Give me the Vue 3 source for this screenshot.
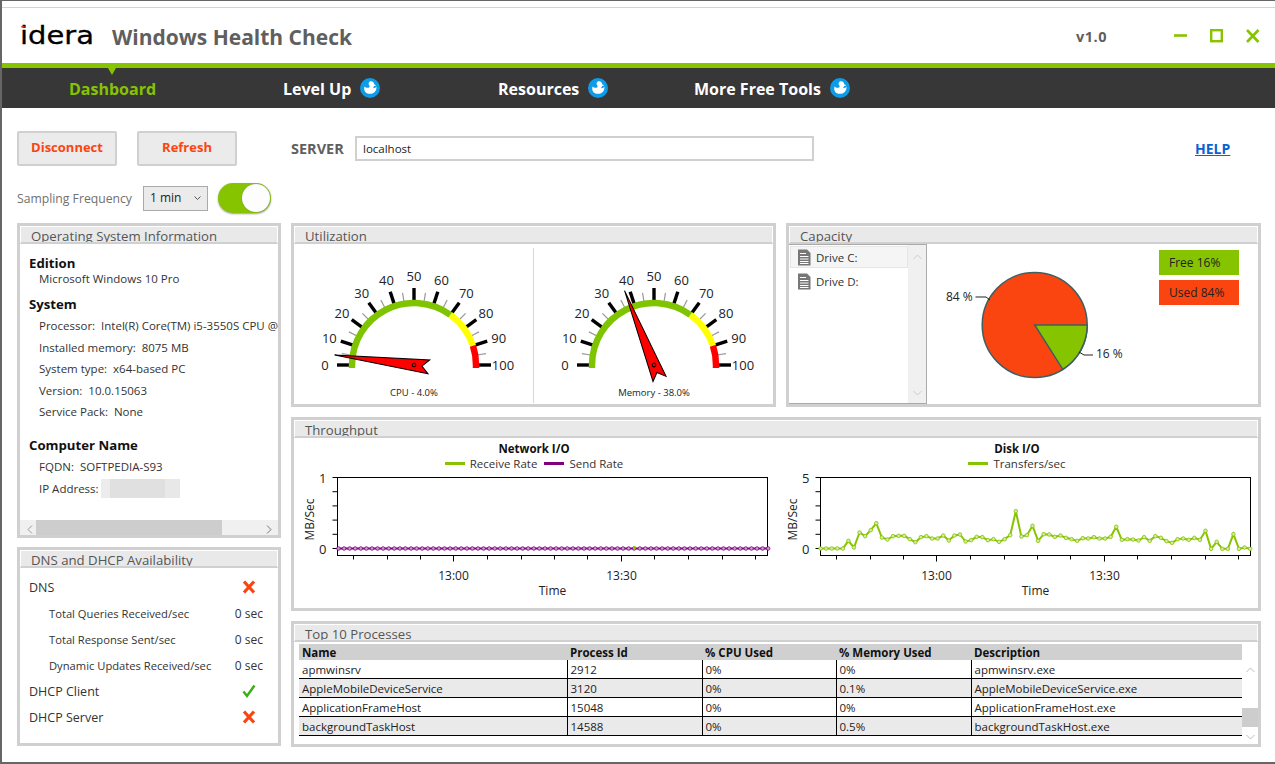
<script setup>
const gauges = [
  { label: 'CPU - 4.0%', value: 4, cx: 120 },
  { label: 'Memory - 38.0%', value: 38, cx: 360 },
]
const major = [0, 10, 20, 30, 40, 50, 60, 70, 80, 90, 100]
const minor = [5, 15, 25, 35, 45, 55, 65, 75, 85, 95]

const pt = (v, r) => {
  const a = Math.PI - (v * 1.8 * Math.PI) / 180
  return { x: Math.cos(a) * r, y: -Math.sin(a) * r }
}
const arc = (from, to) => {
  const a = pt(from, 62)
  const b = pt(to, 62)
  return `M${a.x} ${a.y}A62 62 0 0 1 ${b.x} ${b.y}`
}

const plotW = 430
const netDots = Array.from({ length: 78 }, (_, i) => i * 5.58)
const diskRaw = [400, 400, 400, 400, 400, 377, 397, 352, 363, 345, 324, 367, 373, 363, 362, 362, 372, 381, 366, 363, 370, 370, 361, 376, 361, 358, 379, 375, 365, 366, 375, 372, 380, 372, 360, 288, 364, 360, 332, 377, 357, 358, 365, 361, 368, 372, 377, 369, 370, 366, 370, 370, 365, 335, 374, 372, 373, 376, 366, 377, 363, 368, 378, 383, 372, 370, 374, 368, 374, 347, 401, 380, 401, 401, 357, 401, 397, 401]
const diskPts = diskRaw.map((y, i) => ({ x: i * 5.58, y: (y - 187) / 3 }))
const diskLine = diskPts.map((p) => `${p.x},${p.y}`).join(' ')
const netTicks = [16, 50, 83, 116, 150, 184, 217, 250, 284, 317, 351, 385, 418]
const majorTicks = [116, 284]
const yTicks = [0, 14.2, 28.4, 42.6, 56.8, 71]

const charts = [
  { title: 'Network I/O', max: 1, legend: [{ name: 'Receive Rate', color: '#86c400' }, { name: 'Send Rate', color: '#800080' }] },
  { title: 'Disk I/O', max: 5, legend: [{ name: 'Transfers/sec', color: '#86c400' }] },
]

const processes = [
  ['apmwinsrv', '2912', '0%', '0%', 'apmwinsrv.exe'],
  ['AppleMobileDeviceService', '3120', '0%', '0.1%', 'AppleMobileDeviceService.exe'],
  ['ApplicationFrameHost', '15048', '0%', '0%', 'ApplicationFrameHost.exe'],
  ['backgroundTaskHost', '14588', '0%', '0.5%', 'backgroundTaskHost.exe'],
]
</script>

<template>
  <div class="window">
    <header class="head">
      <svg class="logo" width="74" height="27" viewBox="0 0 74 27">
        <text x="0" y="22" textLength="74" lengthAdjust="spacingAndGlyphs" class="logo-text">idera</text>
        <rect x="1.200" y="4" width="3.400" height="1.400" fill="#e53212" />
      </svg>
      <h1 class="title">Windows Health Check</h1>
      <span class="version">v1.0</span>
      <div class="controls">
        <svg width="14" height="14" viewBox="0 0 14 14"><path d="M0 6.500H13" stroke="#86c400" stroke-width="2.600" /></svg>
        <svg width="14" height="14" viewBox="0 0 14 14"><rect x="1.200" y="1.200" width="10.600" height="11" fill="none" stroke="#86c400" stroke-width="2.400" /></svg>
        <svg width="14" height="14" viewBox="0 0 14 14"><path d="M1 1L12.500 13M12.500 1L1 13" stroke="#86c400" stroke-width="2.600" /></svg>
      </div>
    </header>

    <nav class="nav">
      <span class="tab active">Dashboard</span>
      <span v-for="t in ['Level Up', 'Resources', 'More Free Tools']" :key="t" class="tab" :class="'tab-' + t.split(' ')[0]">
        {{ t }}
        <svg class="duck" width="20" height="20" viewBox="0 0 20 20">
          <circle cx="10" cy="10" r="10" fill="#0e9ce8" />
          <path d="M11 3.200c2 0 3.200 1.400 3.100 3l2.200 1-2.300 1c-.2.900-.6 1.400-.9 1.900 1.400.3 2.500-.5 3.300-1.600.5 3.800-1.800 7.300-6.400 7.300-3.600 0-5.800-2-5.800-5.300 0-.7.100-1.300.3-1.900 1 1.200 3.600 1.700 4.700.8.700-.6.500-1.300-.1-2.300-1.300-2.100.2-3.900 1.900-3.900z" fill="#fff" />
        </svg>
      </span>
    </nav>

    <main class="body">
      <div class="toolbar">
        <div class="tool-left">
          <div class="btns">
            <button class="btn">Disconnect</button>
            <button class="btn">Refresh</button>
          </div>
          <div class="sampling">
            <span class="samp-label">Sampling Frequency</span>
            <div class="select"><span>1 min</span>
              <svg width="7" height="4" viewBox="0 0 7 4"><path d="M.5.500L3.500 3.500L6.500.500" fill="none" stroke="#555" /></svg>
            </div>
            <div class="toggle"><span class="knob"></span></div>
          </div>
        </div>
        <div class="server">
          <b>SERVER</b>
          <div class="server-input">localhost</div>
        </div>
        <a class="help">HELP</a>
      </div>

      <div class="grid">
        <div class="left-col">
          <section class="panel os">
            <h2>Operating System Information</h2>
            <div class="os-body">
              <div class="os-scroll">
                <h3>Edition</h3>
                <p class="first">Microsoft Windows 10 Pro</p>
                <h3 class="sys">System</h3>
                <p class="proc">Processor:&nbsp; Intel(R) Core(TM) i5-3550S CPU @</p>
                <p>Installed memory:&nbsp; 8075 MB</p>
                <p>System type:&nbsp; x64-based PC</p>
                <p>Version:&nbsp; 10.0.15063</p>
                <p>Service Pack:&nbsp; None</p>
                <h3 class="comp">Computer Name</h3>
                <p class="fqdn">FQDN:&nbsp; SOFTPEDIA-S93</p>
                <p class="ip">IP Address: <span class="blur"></span></p>
              </div>
              <div class="hscroll">
                <svg width="6" height="9" viewBox="0 0 6 9"><path d="M5 .5L1 4.500L5 8.500" fill="none" stroke="#999" /></svg>
                <span class="hthumb"></span>
                <svg width="6" height="9" viewBox="0 0 6 9"><path d="M1 .5L5 4.500L1 8.500" fill="none" stroke="#777" /></svg>
              </div>
            </div>
          </section>

          <section class="panel dns">
            <h2>DNS and DHCP Availability</h2>
            <div class="dns-body">
              <div class="dns-row"><span>DNS</span>
                <svg class="st" width="14" height="14" viewBox="0 0 14 14"><path d="M2 1.500L12 12.500M12 1.500L2 12.500" stroke="#fb4510" stroke-width="3.200" /></svg>
              </div>
              <div class="dns-row sub"><span>Total Queries Received/sec</span><span class="sec">0 sec</span></div>
              <div class="dns-row sub"><span>Total Response Sent/sec</span><span class="sec">0 sec</span></div>
              <div class="dns-row sub"><span>Dynamic Updates Received/sec</span><span class="sec">0 sec</span></div>
              <div class="dns-row"><span>DHCP Client</span>
                <svg class="st" width="14" height="14" viewBox="0 0 14 14"><path d="M1.500 7.500L5 12L12.500 1.500" fill="none" stroke="#3cae14" stroke-width="2.400" /></svg>
              </div>
              <div class="dns-row"><span>DHCP Server</span>
                <svg class="st" width="14" height="14" viewBox="0 0 14 14"><path d="M2 1.500L12 12.500M12 1.500L2 12.500" stroke="#fb4510" stroke-width="3.200" /></svg>
              </div>
            </div>
          </section>
        </div>

        <div class="right-col">
          <div class="top-row">
            <section class="panel util">
              <h2>Utilization</h2>
              <svg class="gauges" width="479" height="160" viewBox="0 0 479 160">
                <line x1="239.500" y1="1" x2="239.500" y2="156" stroke="#d8d8d8" />
                <g v-for="g in gauges" :key="g.label" :transform="`translate(${g.cx} 118)`">
                  <line v-for="v in minor" :key="v" :x1="pt(v, 64).x" :y1="pt(v, 64).y" :x2="pt(v, 73).x" :y2="pt(v, 73).y" stroke="#999" stroke-width="1.200" />
                  <line v-for="v in major" :key="v" :x1="pt(v, 64).x" :y1="pt(v, 64).y" :x2="pt(v, 77).x" :y2="pt(v, 77).y" stroke="#000" stroke-width="3.400" />
                  <path :d="arc(0, 70)" fill="none" stroke="#7fc400" stroke-width="6.500" />
                  <path :d="arc(70, 90)" fill="none" stroke="#ffff00" stroke-width="6.500" />
                  <path :d="arc(90, 100)" fill="none" stroke="#ff0000" stroke-width="6.500" />
                  <path d="M-65.250 0V3h6.500V0z" fill="#7fc400" />
                  <path d="M58.750 0V3h6.500V0z" fill="#ff0000" />
                  <text v-for="v in major" :key="v" :x="pt(v, 89).x" :y="pt(v, 89).y + 5" text-anchor="middle" class="g-num">{{ v }}</text>
                  <g :transform="`rotate(${g.value * 1.8})`">
                    <path d="M-80 0L15 -7L8 0L15 7Z" fill="#ff0000" stroke="#000" stroke-width="1" stroke-linejoin="miter" />
                    <circle r="1.800" fill="none" stroke="#000" stroke-width="1" />
                  </g>
                  <text x="0" y="31" text-anchor="middle" class="g-label">{{ g.label }}</text>
                </g>
              </svg>
            </section>

            <section class="panel cap">
              <h2>Capacity</h2>
              <div class="cap-body">
                <div class="drives">
                  <div class="drive-list">
                    <div v-for="(d, i) in ['Drive C:', 'Drive D:']" :key="d" class="drive" :class="{ sel: i === 0 }">
                      <svg width="14" height="17" viewBox="0 0 14 17">
                        <path d="M1 .5H10L13.500 4V16.500H1z" fill="#777" />
                        <path d="M3 4.500H9M3 7.500H11.500M3 10H11.500M3 12.500H11.500M3 14.500H11.500" stroke="#fff" stroke-width="1" />
                      </svg>
                      {{ d }}
                    </div>
                  </div>
                  <div class="vscroll">
                    <svg width="9" height="6" viewBox="0 0 9 6"><path d="M.5 5L4.500 1L8.500 5" fill="none" stroke="#ccc" /></svg>
                    <svg width="9" height="6" viewBox="0 0 9 6"><path d="M.5 1L4.500 5L8.500 1" fill="none" stroke="#ccc" /></svg>
                  </div>
                </div>
                <div class="pie-area">
                  <svg width="230" height="158" viewBox="0 0 230 158">
                    <circle cx="107.700" cy="81" r="52.500" fill="#fb4510" stroke="#3f5f5f" stroke-width="1.500" />
                    <path d="M107.700 81H160.200A52.500 52.500 0 0 1 135.800 125.300Z" fill="#86c400" stroke="#3f5f5f" stroke-width="1.500" />
                    <path d="M48.500 53H59L63 56" fill="none" stroke="#222" />
                    <path d="M152 108L157 111H166" fill="none" stroke="#222" />
                    <text x="19" y="57" class="p-num">84 %</text>
                    <text x="169" y="114" class="p-num">16 %</text>
                  </svg>
                  <div class="legend">
                    <div class="leg free">Free 16%</div>
                    <div class="leg used">Used 84%</div>
                  </div>
                </div>
              </div>
            </section>
          </div>

          <section class="panel through">
            <h2>Throughput</h2>
            <div class="charts">
              <div v-for="(c, ci) in charts" :key="c.title" class="chart" :class="'chart-' + ci">
                <div class="c-title">{{ c.title }}</div>
                <div class="c-legend">
                  <span v-for="l in c.legend" :key="l.name" class="c-leg"><i :style="{ background: l.color }"></i>{{ l.name }}</span>
                </div>
                <svg width="480" height="136" viewBox="0 0 480 136">
                  <g transform="translate(43.500 7.500)">
                    <text x="-24" y="42" transform="rotate(-90 -24 42)" text-anchor="middle" class="ax">MB/Sec</text>
                    <text x="-11" y="5" text-anchor="end" class="ax-y">{{ c.max }}</text>
                    <text x="-11" y="76" text-anchor="end" class="ax-y">0</text>
                    <rect x="0" y="0" :width="plotW" height="78" fill="#fff" stroke="#000" stroke-width="1" />
                    <line v-for="t in yTicks" :key="t" x1="-5" :y1="t" x2="0" :y2="t" stroke="#000" />
                    <line v-for="t in netTicks" :key="t" :x1="t" y1="78" :x2="t" :y2="majorTicks.includes(t) ? 84 : 82" stroke="#000" />
                    <text x="116" y="102" text-anchor="middle" class="ax">13:00</text>
                    <text x="284" y="102" text-anchor="middle" class="ax">13:30</text>
                    <text x="215" y="117" text-anchor="middle" class="ax">Time</text>
                    <template v-if="ci === 0">
                      <line x1="0" y1="71" :x2="plotW" y2="71" stroke="#800080" stroke-width="2" />
                      <circle v-for="x in netDots" :key="x" :cx="x + 1" cy="71" r="1.800" fill="#c8a0c8" stroke="#800080" stroke-width="0.800" />
                      <circle cx="297" cy="70" r="1.500" fill="#86c400" />
                    </template>
                    <template v-else>
                      <polyline :points="diskLine" fill="none" stroke="#86c400" stroke-width="2" />
                      <circle v-for="p in diskPts" :key="p.x" :cx="p.x" :cy="p.y" r="1.800" fill="#d4eba0" stroke="#86c400" stroke-width="0.800" />
                    </template>
                  </g>
                </svg>
              </div>
            </div>
          </section>

          <section class="panel procs">
            <h2>Top 10 Processes</h2>
            <div class="proc-wrap">
              <table class="ptable">
                <colgroup>
                  <col class="c1" /><col class="c2" /><col class="c3" /><col class="c4" /><col />
                </colgroup>
                <thead>
                  <tr><th>Name</th><th>Process Id</th><th>% CPU Used</th><th>% Memory Used</th><th>Description</th></tr>
                </thead>
                <tbody>
                  <tr v-for="row in processes" :key="row[0]">
                    <td v-for="cell in row" :key="cell">{{ cell }}</td>
                  </tr>
                </tbody>
              </table>
              <div class="tscroll">
                <svg width="9" height="6" viewBox="0 0 9 6"><path d="M.5 5L4.500 1L8.500 5" fill="none" stroke="#bbb" /></svg>
                <span class="tthumb"></span>
                <svg width="9" height="6" viewBox="0 0 9 6"><path d="M.5 1L4.500 5L8.500 1" fill="none" stroke="#bbb" /></svg>
              </div>
            </div>
          </section>
        </div>
      </div>
    </main>
  </div>
</template>

<style>
html, body { margin: 0; background: #fff; }
</style>

<style scoped>
.window {
  width: 1275px;
  height: 764px;
  box-sizing: border-box;
  overflow: hidden;
  border-top: 1px solid #666;
  border-left: 2px solid #666;
  border-bottom: 2px solid #666;
  font-family: "Open Sans", "Noto Sans", sans-serif;
  color: #222;
  background: #fff;
}
.head {
  height: 55px;
  margin-top: 6px;
  border-top: 1px solid #d4d4d4;
  display: flex;
  align-items: center;
  padding-left: 18px;
}
.logo-text { font-family: "DejaVu Sans", sans-serif; font-size: 24px; fill: #000; stroke: #000; stroke-width: 0.3px; }
.title {
  margin: 3px 0 0 18px;
  font-size: 21px;
  font-weight: 700;
  color: #5f5f5f;
}
.version { margin-left: auto; padding-top: 2px; font-size: 14.500px; font-weight: 700; color: #5f5f5f; letter-spacing: 0.5px; }
.controls { display: flex; gap: 22px; margin: 0 15px 0 67px; }
.nav {
  height: 39px;
  padding-top: 1px;
  border-top: 5px solid #86c400;
  background: #373737;
  display: flex;
  align-items: center;
  position: relative;
}
.nav::before {
  content: "";
  position: absolute;
  left: 106px;
  top: 0;
  border: 4px solid transparent;
  border-top: 7px solid #86c400;
  border-bottom: 0;
}
.tab {
  display: flex;
  align-items: center;
  gap: 9px;
  color: #fff;
  font-size: 16px;
  font-weight: 700;
  white-space: nowrap;
}
.duck { margin-top: -1px; }
.tab.active { color: #86c400; width: 281px; padding-left: 67px; box-sizing: border-box; }
.tab-Level { width: 215px; }
.tab-Resources { width: 196px; }
.body { padding: 23px 14px 0 15px; }
.toolbar { display: flex; height: 92px; }
.tool-left { width: 274px; }
.btns { display: flex; gap: 20px; }
.btn {
  width: 100px;
  height: 35px;
  background: #ebebeb;
  border: 2px solid #d0d0d0;
  border-radius: 2px;
  color: #fb4510;
  font: 700 13px "Open Sans", sans-serif;
  padding: 0 0 3px;
}
.sampling { display: flex; align-items: center; margin-top: 17px; height: 30px; }
.samp-label { width: 126px; font-size: 12.200px; color: #707070; white-space: nowrap; }
.select {
  width: 65px;
  height: 25px;
  box-sizing: border-box;
  border: 1px solid #aaa;
  background: #ebebeb;
  font-size: 12px;
  color: #222;
  display: flex;
  align-items: center;
  justify-content: space-between;
  padding: 0 6px;
}
.select span { padding-bottom: 2px; }
.toggle {
  width: 53px;
  height: 30px;
  margin-left: 10px;
  border-radius: 15px;
  background: #86c400;
  display: flex;
  justify-content: flex-end;
  align-items: center;
  box-shadow: 0 1px 2px #9b9b9b;
}
.knob {
  width: 28px;
  height: 28px;
  border-radius: 50%;
  background: #fdfdfd;
  box-shadow: 0 0 1px #777;
  margin-right: 1px;
}
.server { display: flex; align-items: flex-start; padding-top: 5px; }
.server b { font-size: 14.500px; color: #5f5f5f; width: 64px; line-height: 25px; }
.server-input {
  width: 459px;
  height: 25px;
  box-sizing: border-box;
  border: 2px solid #d0d0d0;
  font-size: 11.500px;
  line-height: 21px;
  padding-left: 6px;
  color: #222;
}
.help {
  margin-left: 381px;
  padding-top: 8px;
  font-size: 14px;
  font-weight: 700;
  color: #0b62d0;
  text-decoration: underline;
  height: 20px;
}
.grid { display: flex; gap: 10px; }
.left-col { width: 264px; display: flex; flex-direction: column; gap: 9px; flex: none; }
.right-col { width: 970px; display: flex; flex-direction: column; gap: 10px; }
.top-row { display: flex; gap: 10px; }
.panel {
  box-sizing: border-box;
  border: 3px solid #d0d0d0;
  background: #fff;
  overflow: hidden;
  min-width: 0;
}
h2 {
  margin: 0;
  height: 18px;
  border-top: 1px solid #fff;
  border-left: 1px solid #fff;
  border-right: 1px solid #fff;
  border-bottom: 2px solid #d0d0d0;
  box-sizing: border-box;
  background: #e9e9e9;
  font-size: 13.200px;
  font-weight: 400;
  line-height: 18px;
  color: #555;
  padding-left: 10px;
  overflow: hidden;
}
.os { height: 315px; }
.os-body { height: 294px; display: flex; flex-direction: column; }
.os-scroll { flex: 1; overflow: hidden; padding: 10px 0 0 9px; white-space: nowrap; }
h3 { margin: 0; font-size: 13.200px; font-weight: 700; color: #111; line-height: 19px; }
.os p { margin: 0 0 0 10px; font-size: 11.500px; line-height: 21.600px; color: #333; }
.os p.first { line-height: 12px; }
.sys { margin-top: 10px; }
.proc { margin-top: 1px !important; }
.comp { margin-top: 13px; }
.fqdn { margin-top: 1px !important; }
.blur { display: inline-block; width: 79px; height: 19px; vertical-align: -5px; margin-left: -1px; background: linear-gradient(90deg, #ececec 11%, #dfe0df 11%, #dfe0df 81%, #e8e8e8 81%); }
.hscroll {
  height: 18px;
  background: #f0f0f0;
  display: flex;
  align-items: center;
  justify-content: space-between;
  padding: 0 6px 0 7px;
  position: relative;
}
.hthumb { position: absolute; left: 16px; width: 186px; height: 18px; background: #cdcdcd; }
.dns { height: 199px; }
.dns-body { padding: 6px 9px 0 9px; font-size: 12.500px; color: #333; }
.dns-row { display: flex; justify-content: space-between; align-items: center; height: 26px; padding-right: 13px; }
.dns-row.sub { padding: 0 0 0 20px; font-size: 11.200px; }
.sec { margin-right: 6px; font-size: 12px; }
.util { width: 485px; height: 184px; }
.gauges { display: block; margin-top: 3px; }
.g-num { font-size: 13px; fill: #222; }
.g-label { font-size: 9.500px; fill: #222; }
.cap { width: 475px; height: 184px; }
.cap-body { display: flex; height: 160px; }
.drives {
  width: 139px;
  height: 160px;
  box-sizing: border-box;
  border: 1px solid #aaa;
  margin-left: -1px;
  display: flex;
  flex: none;
}
.drive-list { flex: 1; padding: 1px 0 0 1px; }
.drive { display: flex; align-items: center; gap: 5px; height: 22px; margin-bottom: 2px; font-size: 11.500px; color: #333; padding-left: 7px; box-sizing: border-box; }
.drive.sel { background: #f5f5f5; border: 1px solid #e6e6e6; padding-left: 6px; }
.vscroll { width: 18px; background: #f0f0f0; display: flex; flex-direction: column; justify-content: space-between; align-items: center; padding: 9px 0 7px; box-sizing: border-box; }
.pie-area { display: flex; flex: 1; }
.p-num { font-size: 12px; fill: #222; }
.legend { margin: 6px 0 0 2px; display: flex; flex-direction: column; gap: 5px; }
.leg { width: 80px; height: 25px; font-size: 12px; line-height: 25px; padding-left: 10px; box-sizing: border-box; color: #222; }
.free { background: #86c400; }
.used { background: #fb4510; }
.through { height: 194px; }
.charts { display: flex; }
.chart { width: 480px; }
.chart-1 { margin-left: 3px; }
.c-title { text-align: center; font-size: 11.500px; font-weight: 700; line-height: 15px; color: #111; margin-top: 3px; }
.c-legend { display: flex; justify-content: center; font-size: 11.500px; line-height: 15px; color: #333; gap: 7px; height: 14px; }
.c-leg { display: flex; align-items: center; gap: 5px; }
.c-leg i { width: 20px; height: 3px; display: block; }
.chart svg { display: block; }
.ax { font-size: 12px; fill: #222; }
.ax-y { font-size: 13px; fill: #222; }
.procs { height: 126px; }
.proc-wrap { display: flex; align-items: flex-start; padding: 2px 0 0 5px; }
.ptable {
  width: 943px;
  table-layout: fixed;
  border-collapse: collapse;
  font-size: 11.500px;
  flex: none;
}
.c1 { width: 268px; }
.c2 { width: 135px; }
.c3 { width: 134px; }
.c4 { width: 135px; }
.ptable th {
  height: 16px;
  padding: 2px 0 0 3px;
  box-sizing: border-box;
  background: #d0d0d0;
  text-align: left;
  font-weight: 700;
  line-height: 14px;
  color: #111;
}
.ptable td {
  height: 18px;
  padding: 2px 0 0 3px;
  box-sizing: content-box;
  border-bottom: 1px solid #000;
  border-left: 1px solid #000;
  line-height: 16px;
  color: #222;
  white-space: nowrap;
}
.ptable td { height: 16px; }
.ptable td:first-child { border-left: 0; }
.ptable tbody tr:nth-child(even) td { background: #eaeaea; }
.tscroll {
  width: 16px;
  height: 80px;
  margin-top: 16px;
  display: flex;
  flex-direction: column;
  align-items: center;
  justify-content: space-between;
  padding: 7px 0 0;
  box-sizing: border-box;
  position: relative;
}
.tthumb { position: absolute; left: 0; top: 48px; width: 16px; height: 19px; background: #cdcdcd; }
</style>
